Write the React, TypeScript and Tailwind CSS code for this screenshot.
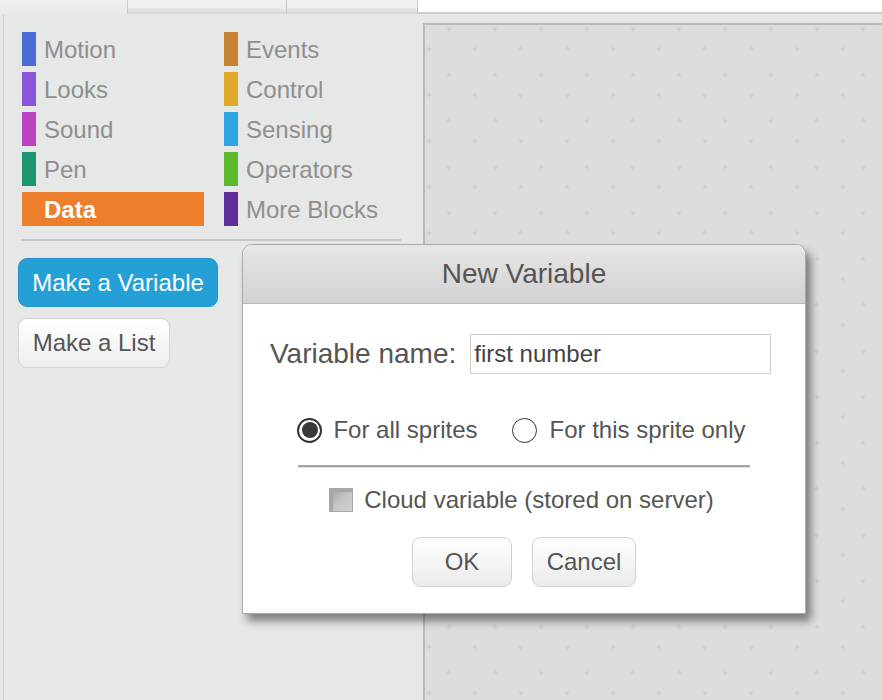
import React from 'react';

type Category = { name: string; color: string; selected?: boolean };

const leftColumn: Category[] = [
  { name: 'Motion', color: '#4a6cd4' },
  { name: 'Looks', color: '#8a55d7' },
  { name: 'Sound', color: '#bb42c3' },
  { name: 'Pen', color: '#1d9670' },
  { name: 'Data', color: '#ec7e2c', selected: true },
];

const rightColumn: Category[] = [
  { name: 'Events', color: '#c88235' },
  { name: 'Control', color: '#e1a92c' },
  { name: 'Sensing', color: '#2ca5e2' },
  { name: 'Operators', color: '#5cb72a' },
  { name: 'More Blocks', color: '#632d99' },
];

const CategoryItem: React.FC<{ item: Category }> = ({ item }) => {
  if (item.selected) {
    return (
      <div className="h-[34px] w-[182px] flex items-center bg-[#ec7e2c] pl-[22px] pt-[2px] text-[24px] font-bold text-white">
        {item.name}
      </div>
    );
  }
  return (
    <div className="h-[34px] flex items-center">
      <div className="w-[14px] h-full" style={{ backgroundColor: item.color }} />
      <span className="ml-[8px] pt-[2px] text-[24px] text-[#8e8e8e]">{item.name}</span>
    </div>
  );
};

const ScriptGrid: React.FC = () => (
  <svg className="block w-full h-full">
    <defs>
      <pattern id="plus-grid" width="46" height="46" patternUnits="userSpaceOnUse">
        <path d="M24 1.5v5M21.5 4h5M4 21.5v5M1.5 24h5" stroke="#cfd1d1" strokeWidth="1.6" />
      </pattern>
    </defs>
    <rect width="100%" height="100%" fill="url(#plus-grid)" />
  </svg>
);

const Radio: React.FC<{ checked?: boolean }> = ({ checked }) =>
  checked ? (
    <div className="w-[25px] h-[25px] rounded-full border-2 border-[#333] bg-white flex items-center justify-center">
      <div className="w-[16px] h-[16px] rounded-full bg-[#3a3a3a]" />
    </div>
  ) : (
    <div className="w-[25px] h-[25px] rounded-full border-[1.5px] border-[#333] bg-white" />
  );

export default function App() {
  return (
    <div className="relative w-[882px] h-[700px] overflow-hidden bg-[#e6e8e8] font-['Liberation_Sans',Arial,sans-serif]">
      {/* tab strip */}
      <div className="flex h-[14px]">
        <div className="w-[127px] bg-gradient-to-b from-[#f0f0f0] to-[#e9eaea]" />
        <div className="w-[160px] border-l border-[#c9c9c9] border-r bg-gradient-to-b from-[#f1f1f1] via-[#eeeeee] to-[#d6d6d6]" />
        <div className="w-[131px] border-r border-[#c9c9c9] bg-gradient-to-b from-[#f1f1f1] via-[#eeeeee] to-[#d6d6d6]" />
        <div className="flex-1 bg-white border-b-2 border-[#cfcfcf]" />
      </div>

      <div className="flex h-[686px]">
        {/* palette */}
        <div className="w-[420px] ml-[3px] border-l border-[#cfd0d0] pt-[18px]">
          <div className="ml-[18px] flex gap-x-[20px]">
            <div className="flex flex-col gap-y-[6px] w-[182px]">
              {leftColumn.map((c) => (
                <CategoryItem key={c.name} item={c} />
              ))}
            </div>
            <div className="flex flex-col gap-y-[6px]">
              {rightColumn.map((c) => (
                <CategoryItem key={c.name} item={c} />
              ))}
            </div>
          </div>

          <div className="ml-[17px] mt-[13px] w-[380px] h-[2px] bg-[#c6c7c7]" />

          <div className="ml-[14px] mt-[17px] flex flex-col items-start gap-[11px]">
            <button className="h-[49px] w-[200px] rounded-[9px] bg-[#25a0d6] border border-[#2396c9] text-[24px] text-white">
              Make a Variable
            </button>
            <button className="h-[50px] w-[152px] rounded-[9px] border border-[#d4d4d4] bg-gradient-to-b from-white to-[#eeeeee] text-[24px] text-[#555]">
              Make a List
            </button>
          </div>
        </div>

        {/* scripts area */}
        <div className="mt-[9px] flex-1 border-l-2 border-t-2 border-[#b9bbbb] bg-[#dcdddd]">
          <ScriptGrid />
        </div>
      </div>

      {/* New Variable dialog */}
      <div className="absolute left-[242px] top-[244px] w-[564px] h-[370px] rounded-t-[10px] border border-[#a9a9a9] bg-white shadow-[5px_7px_8px_rgba(0,0,0,0.45)]">
        <div className="h-[59px] rounded-t-[10px] border-b border-[#b8b8b8] bg-gradient-to-b from-[#e6e6e6] to-[#d2d2d2] flex items-center justify-center text-[28px] text-[#555]">
          New Variable
        </div>

        <div className="mt-[30px] pl-[27px] flex items-center">
          <span className="text-[28px] text-[#555] leading-[40px]">Variable name:</span>
          <div className="ml-[14px] w-[301px] h-[40px] border border-[#cccccc] px-[3px] flex items-center text-[24px] text-[#444]">
            first number
          </div>
        </div>

        <div className="mt-[41px] pr-[5px] h-[30px] flex items-center justify-center text-[24px] text-[#555]">
          <Radio checked />
          <span className="ml-[11px]">For all sprites</span>
          <div className="ml-[35px]">
            <Radio />
          </div>
          <span className="ml-[12px]">For this sprite only</span>
        </div>

        <div className="mt-[20px] mx-auto w-[452px] h-[3px] border-t-2 border-[#a3a3a3] bg-[#dedede]" />

        <div className="mt-[17px] pr-[5px] h-[30px] flex items-center justify-center text-[24px] text-[#555]">
          <div className="w-[24px] h-[24px] border border-[#a8a8a8] bg-gradient-to-br from-[#9c9c9c] via-[#c4c4c4] to-[#d2d2d2] shadow-[inset_3px_3px_0_#a6a6a6]" />
          <span className="ml-[11px]">Cloud variable (stored on server)</span>
        </div>

        <div className="mt-[22px] flex justify-center gap-[20px]">
          <button className="h-[50px] w-[100px] rounded-[9px] border border-[#cfcfcf] bg-gradient-to-b from-white to-[#ebebeb] text-[24px] text-[#555]">
            OK
          </button>
          <button className="h-[50px] w-[104px] rounded-[9px] border border-[#cfcfcf] bg-gradient-to-b from-white to-[#ebebeb] text-[24px] text-[#555]">
            Cancel
          </button>
        </div>
      </div>
    </div>
  );
}
